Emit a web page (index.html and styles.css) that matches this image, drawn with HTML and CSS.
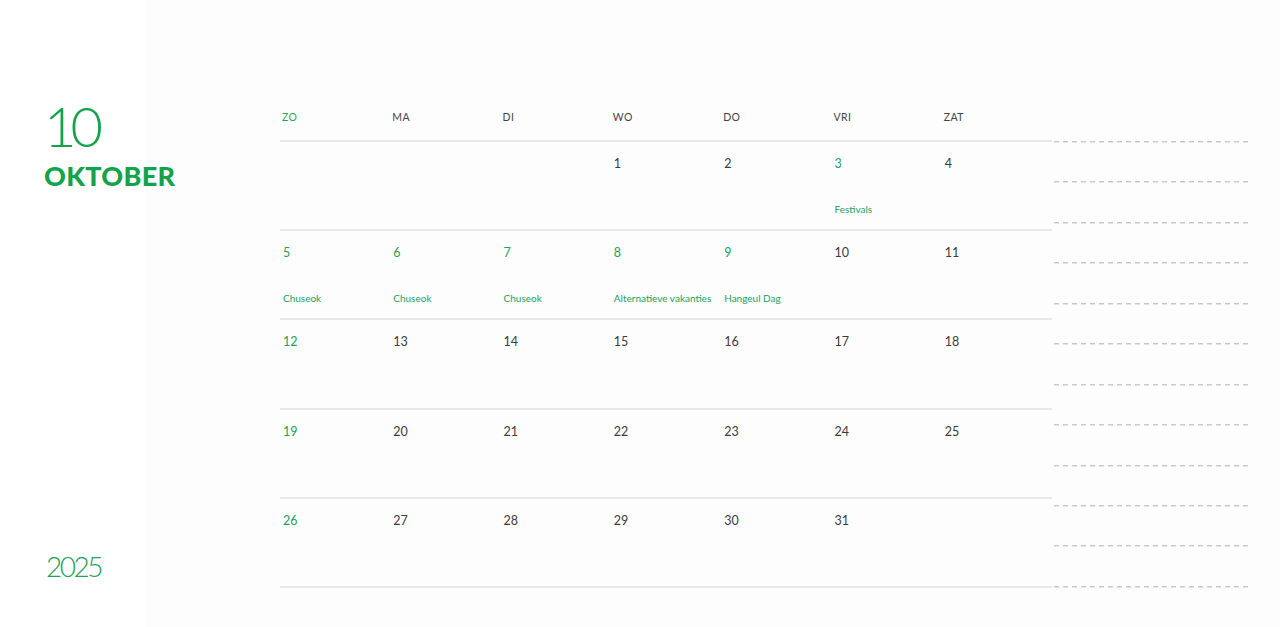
FILE: index.html
```html
<!DOCTYPE html>
<html lang="nl">
<head>
<meta charset="utf-8">
<title>Oktober 2025</title>
<link rel="stylesheet" href="styles.css">
</head>
<body>
<div class="page">
  <aside class="side">
    <div class="month-num">10</div>
    <div class="month-name">OKTOBER</div>
    <div class="year">2025</div>
  </aside>
  <main class="cal">
    <div class="weekdays">
      <div class="wd sun">ZO</div>
      <div class="wd">MA</div>
      <div class="wd">DI</div>
      <div class="wd">WO</div>
      <div class="wd">DO</div>
      <div class="wd">VRI</div>
      <div class="wd">ZAT</div>
    </div>
    <div class="week">
      <div class="day"></div>
      <div class="day"></div>
      <div class="day"></div>
      <div class="day"><span class="num">1</span></div>
      <div class="day"><span class="num">2</span></div>
      <div class="day"><span class="num hol">3</span><span class="evt">Festivals</span></div>
      <div class="day"><span class="num">4</span></div>
    </div>
    <div class="week">
      <div class="day"><span class="num hol">5</span><span class="evt">Chuseok</span></div>
      <div class="day"><span class="num hol">6</span><span class="evt">Chuseok</span></div>
      <div class="day"><span class="num hol">7</span><span class="evt">Chuseok</span></div>
      <div class="day"><span class="num hol">8</span><span class="evt">Alternatieve vakanties</span></div>
      <div class="day"><span class="num hol">9</span><span class="evt">Hangeul Dag</span></div>
      <div class="day"><span class="num">10</span></div>
      <div class="day"><span class="num">11</span></div>
    </div>
    <div class="week">
      <div class="day"><span class="num hol">12</span></div>
      <div class="day"><span class="num">13</span></div>
      <div class="day"><span class="num">14</span></div>
      <div class="day"><span class="num">15</span></div>
      <div class="day"><span class="num">16</span></div>
      <div class="day"><span class="num">17</span></div>
      <div class="day"><span class="num">18</span></div>
    </div>
    <div class="week">
      <div class="day"><span class="num hol">19</span></div>
      <div class="day"><span class="num">20</span></div>
      <div class="day"><span class="num">21</span></div>
      <div class="day"><span class="num">22</span></div>
      <div class="day"><span class="num">23</span></div>
      <div class="day"><span class="num">24</span></div>
      <div class="day"><span class="num">25</span></div>
    </div>
    <div class="week">
      <div class="day"><span class="num hol">26</span></div>
      <div class="day"><span class="num">27</span></div>
      <div class="day"><span class="num">28</span></div>
      <div class="day"><span class="num">29</span></div>
      <div class="day"><span class="num">30</span></div>
      <div class="day"><span class="num">31</span></div>
      <div class="day"></div>
    </div>
  </main>
  <section class="notes">
    <div class="line"></div><div class="line"></div><div class="line"></div>
    <div class="line"></div><div class="line"></div><div class="line"></div>
    <div class="line"></div><div class="line"></div><div class="line"></div>
    <div class="line"></div><div class="line"></div><div class="line"></div>
  </section>
</div>
</body>
</html>
```

FILE: styles.css
```css
* { box-sizing: border-box; }
html, body { margin: 0; padding: 0; }
body {
  width: 1280px;
  height: 627px;
  overflow: hidden;
  background: linear-gradient(to right, #ffffff 0, #ffffff 145px, #fefdfe 145px);
  font-family: "Lato", "Noto Sans", sans-serif;
  color: #333;
}
.page {
  display: flex;
  height: 627px;
}
.side {
  width: 280px;
  flex: none;
  display: flex;
  flex-direction: column;
  padding: 98px 0 0 44px;
}
.month-num {
  font-family: "Lato", sans-serif;
  font-weight: 300;
  font-size: 56px;
  line-height: 56px;
  color: #14a24a;
  letter-spacing: -6px;
}
.month-name {
  margin-top: 6px;
  font-family: "Lato", sans-serif;
  font-weight: 900;
  font-size: 27px;
  line-height: 32px;
  color: #14a24a;
  letter-spacing: 0.3px;
}
.year {
  margin-top: auto;
  margin-bottom: 46px;
  margin-left: 2px;
  font-family: "Lato", sans-serif;
  font-weight: 300;
  font-size: 28px;
  line-height: 30px;
  color: #22a05a;
  letter-spacing: -2.5px;
}
.cal {
  width: 772px;
  flex: none;
  padding-top: 100px;
}
.weekdays {
  display: grid;
  grid-template-columns: repeat(7, 1fr);
  height: 42px;
  border-bottom: 2px solid #e8e7ea;
}
.wd {
  padding: 11px 0 0 2px;
  font-size: 10.5px;
  letter-spacing: 0.4px;
  color: #444;
}
.wd.sun { color: #2aa55a; }
.week {
  display: grid;
  grid-template-columns: repeat(7, 1fr);
  height: 89.2px;
  border-bottom: 2px solid #e8e7ea;
}
.day {
  display: flex;
  flex-direction: column;
  padding: 14px 0 0 3px;
}
.num {
  font-size: 12.5px;
  line-height: 16px;
  color: #3a3a3a;
}
.num.hol { color: #22a05a; }
.evt {
  margin-top: 30px;
  font-size: 10px;
  line-height: 14px;
  color: #22a05a;
  white-space: nowrap;
}
.notes {
  width: 196px;
  flex: none;
  margin-left: 2px;
  padding-top: 141px;
  display: flex;
  flex-direction: column;
}
.line {
  height: 40.45px;
  flex: none;
  background: repeating-linear-gradient(to right, #c9c9cc 0, #c9c9cc 5px, transparent 5px, transparent 9px) top left / 100% 1.5px no-repeat;
}
```
